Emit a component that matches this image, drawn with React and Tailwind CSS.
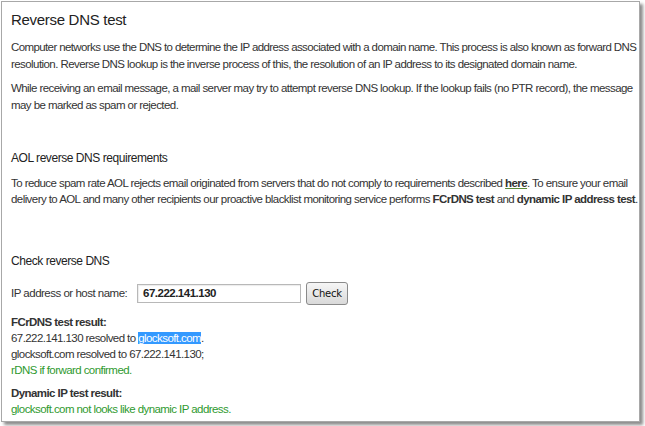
import React from "react";

export default function App() {
  return (
    <div className="w-[645px] h-[426px] bg-white relative" style={{ fontFamily: '"Liberation Sans", Arial, sans-serif' }}>
      <div className="ml-[1px] mt-[1px] w-[639px] h-[421px] border border-[#a8a8a8] bg-white shadow-[3px_3px_3px_rgba(0,0,0,0.45)] pl-[9px] pt-[8px] text-[#333] overflow-hidden">
        <h1 className="text-[15px] leading-[20px] tracking-[-0.3px] text-[#222]">Reverse DNS test</h1>
        <div className="mt-[9px] text-[11.5px] leading-[17px] tracking-[-0.57px] whitespace-nowrap">
          <p><span className="tracking-[-0.61px]">Computer networks use the DNS to determine the IP address associated with a domain name. This process is also known as forward DNS</span><br />resolution. Reverse DNS lookup is the inverse process of this, the resolution of an IP address to its designated domain name.</p>
          <p className="mt-[7px]">While receiving an email message, a mail server may try to attempt reverse DNS lookup. If the lookup fails (no PTR record), the message<br />may be marked as spam or rejected.</p>
        </div>
        <h2 className="mt-[36px] text-[12px] leading-[17px] tracking-[-0.45px] text-[#222]">AOL reverse DNS requirements</h2>
        <p className="mt-[8px] text-[11.5px] leading-[16px] tracking-[-0.57px] whitespace-nowrap">
          To reduce spam rate AOL rejects email originated from servers that do not comply to requirements described{" "}
          <a className="font-bold underline decoration-[#5a8a3a] text-[#333]">here</a>. To ensure your email<br />
          delivery to AOL and many other recipients our proactive blacklist monitoring service performs <b>FCrDNS test</b> and <b>dynamic IP address test</b>.
        </p>
        <h2 className="mt-[46px] text-[12px] leading-[17px] tracking-[-0.45px] text-[#222]">Check reverse DNS</h2>
        <div className="mt-[12px] flex items-center text-[11.5px] tracking-[-0.5px]">
          <span className="w-[126px]">IP address or host name:</span>
          <div className="w-[164px] h-[19px] border border-[#b8b8b8] bg-white flex items-center pl-[5px] font-bold text-[#222] shadow-[inset_1px_1px_1px_rgba(0,0,0,0.08)]">67.222.141.130</div>
          <button className="ml-[5px] w-[42px] h-[23px] rounded-[3px] border border-[#8a8a8a] bg-gradient-to-b from-[#f6f6f6] to-[#d9d9d9] text-[#111] tracking-[-0.3px]" style={{ fontFamily: '"DejaVu Sans", Tahoma, sans-serif', fontSize: "10px" }}>Check</button>
        </div>
        <div className="mt-[9px] text-[11.5px] leading-[16px] tracking-[-0.57px]">
          <p className="font-bold">FCrDNS test result:</p>
          <p>67.222.141.130 resolved to <span className="bg-[#3399ff] text-white">glocksoft.com</span>.</p>
          <p>glocksoft.com resolved to 67.222.141.130;</p>
          <p className="text-[#2f9a2f]">rDNS if forward confirmed.</p>
          <p className="mt-[7px] font-bold">Dynamic IP test result:</p>
          <p className="text-[#2f9a2f]">glocksoft.com not looks like dynamic IP address.</p>
        </div>
      </div>
    </div>
  );
}
